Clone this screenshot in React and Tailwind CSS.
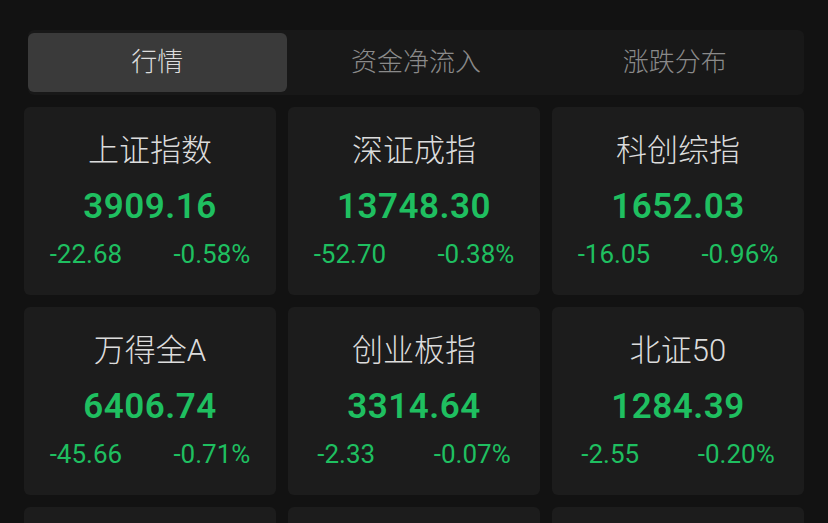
import React from 'react';

const indices = [
  { name: '上证指数', value: '3909.16', change: '-22.68', pct: '-0.58%' },
  { name: '深证成指', value: '13748.30', change: '-52.70', pct: '-0.38%' },
  { name: '科创综指', value: '1652.03', change: '-16.05', pct: '-0.96%' },
  { name: '万得全A', value: '6406.74', change: '-45.66', pct: '-0.71%' },
  { name: '创业板指', value: '3314.64', change: '-2.33', pct: '-0.07%' },
  { name: '北证50', value: '1284.39', change: '-2.55', pct: '-0.20%' },
];

const tabs = ['行情', '资金净流入', '涨跌分布'];

const IndexCard = ({ item }) => (
  <div className="h-[188px] rounded-md bg-[#1c1c1c] flex flex-col items-center">
    <div className="mt-[26px] h-[36px] leading-[36px] text-[31px] font-light text-[#dcdcdc]">{item.name}</div>
    <div className="mt-[18px] h-[40px] leading-[40px] text-[35px] font-semibold text-[#1fbf60] tracking-[0.5px]">
      {item.value}
    </div>
    <div className="mt-[11px] w-full flex justify-around text-[26px] leading-[32px] text-[#1fbf60]">
      <span>{item.change}</span>
      <span>{item.pct}</span>
    </div>
  </div>
);

export default function App() {
  return (
    <div
      className="w-[828px] h-[523px] overflow-hidden bg-[#121212] pt-[30px] px-[24px]"
      style={{ fontFamily: 'Roboto, "Noto Sans CJK SC", sans-serif' }}
    >
      <div className="ml-[4px] h-[65px] bg-[#181818] rounded-md py-[3px] flex">
        {tabs.map((t, i) => (
          <div
            key={t}
            className={`flex-1 flex items-center justify-center rounded-md text-[26px] font-light ${
              i === 0 ? 'bg-[#3a3a3a] text-[#dddddd]' : 'text-[#8a8a8a]'
            }`}
          >
            {t}
          </div>
        ))}
      </div>
      <div className="mt-[12px] grid grid-cols-3 gap-x-[12px] gap-y-[12px]">
        {indices.map((item) => (
          <IndexCard key={item.name} item={item} />
        ))}
        <div className="h-[188px] rounded-md bg-[#1c1c1c]" />
        <div className="h-[188px] rounded-md bg-[#1c1c1c]" />
        <div className="h-[188px] rounded-md bg-[#1c1c1c]" />
      </div>
    </div>
  );
}
